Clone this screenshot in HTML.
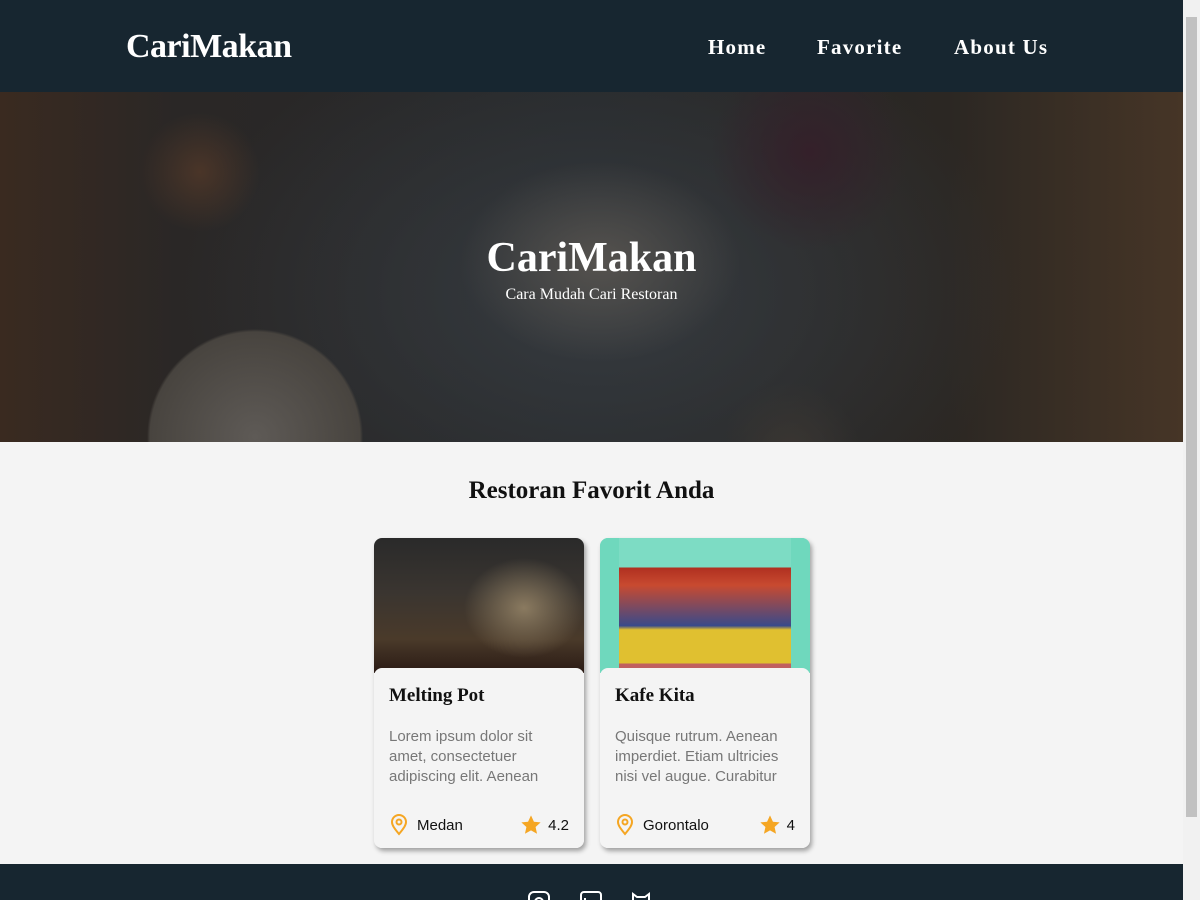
<!DOCTYPE html>
<html><head><meta charset="utf-8"><style>
*{margin:0;padding:0;box-sizing:border-box}
html,body{width:1200px;height:900px;overflow:hidden;background:#f4f4f4;font-family:"Liberation Sans",sans-serif}
.sb{position:absolute;right:0;top:0;width:17px;height:900px;background:#f1f1f1}
.sb div{position:absolute;left:3px;top:17px;width:11px;height:800px;background:#c1c1c1}
header{position:absolute;left:0;top:0;width:1183px;height:92px;background:#172630;color:#fff;font-family:"Liberation Serif",serif}
.logo{position:absolute;left:126px;top:28px;font-size:34px;font-weight:bold;letter-spacing:-0.5px}
nav a{position:absolute;top:35px;font-size:21px;font-weight:bold;letter-spacing:1.2px;color:#fff;text-decoration:none}
.hero{position:absolute;left:0;top:92px;width:1183px;height:350px;overflow:hidden;
background:radial-gradient(ellipse 140px 100px at 600px 170px,#55524e,transparent),
radial-gradient(circle 150px at 255px 345px,#5e5a56 0,#48443f 70%,transparent 72%),
radial-gradient(circle 110px at 810px 60px,#34202a 0,transparent 90%),
radial-gradient(circle 60px at 200px 80px,#4a3528,transparent),
radial-gradient(circle 70px at 790px 360px,#3a3632,transparent),
radial-gradient(ellipse 420px 280px at 600px 200px,#363b40,transparent),
linear-gradient(90deg,#3a2a20 0,#2a2726 15%,#26282a 50%,#2b2723 80%,#463526 100%)}
.hero h1{position:absolute;left:0;width:1183px;top:142px;text-align:center;color:#fff;font-family:"Liberation Serif",serif;font-size:42px;font-weight:bold}
.hero p{position:absolute;left:0;width:1183px;top:194px;text-align:center;color:#fff;font-family:"Liberation Serif",serif;font-size:16px}
h2{position:absolute;left:0;width:1183px;top:477px;text-align:center;font-family:"Liberation Serif",serif;font-size:25px;font-weight:bold;color:#111}
.card{position:absolute;top:538px;width:210px;height:310px;background:#f4f4f4;border-radius:8px;box-shadow:2px 3px 5px rgba(0,0,0,.35);overflow:hidden}
.img{height:135px}
.body{position:absolute;top:130px;left:0;right:0;bottom:0;background:#f4f4f4;border-radius:8px 8px 0 0;padding:0 15px}
.body h3{font-family:"Liberation Serif",serif;font-size:19px;margin-top:17px;color:#111}
.body p{font-size:15px;color:#777;line-height:20px;margin-top:20px}
.loc{position:absolute;bottom:12px;left:15px;font-size:15px;color:#111;display:flex;align-items:center;gap:8px}
.rate{position:absolute;bottom:12px;right:15px;font-size:15px;color:#111;display:flex;align-items:center;gap:6px}
footer{position:absolute;left:0;top:864px;width:1183px;height:36px;background:#172630}
</style></head><body>
<header><div class="logo">CariMakan</div>
<nav><a style="left:708px">Home</a><a style="left:817px">Favorite</a><a style="left:954px">About Us</a></nav></header>
<div class="hero"><h1>CariMakan</h1><p>Cara Mudah Cari Restoran</p></div>
<h2>Restoran Favorit Anda</h2>
<div class="card" style="left:374px"><div class="img" style="background:radial-gradient(ellipse 60px 50px at 150px 70px,#8a7a60,transparent),linear-gradient(180deg,#2a2a2a 0,#3a3530 40%,#4a3a2a 75%,#2a1a14 100%)"></div>
<div class="body"><h3>Melting Pot</h3><p>Lorem ipsum dolor sit amet, consectetuer adipiscing elit. Aenean</p></div>
<div class="loc"><svg width="20" height="22" viewBox="0 0 20 22"><path d="M10 20C5 14 3 11 3 8a7 7 0 0 1 14 0c0 3-2 6-7 12z" fill="none" stroke="#f5a623" stroke-width="2"/><circle cx="10" cy="8" r="2.5" fill="none" stroke="#f5a623" stroke-width="2"/></svg>Medan</div>
<div class="rate"><svg width="22" height="22" viewBox="0 0 24 24"><path d="M12 1.5l3.2 7 7.3.7-5.5 5 1.6 7.3L12 17.8 5.4 21.5 7 14.2l-5.5-5 7.3-.7z" fill="#f5a623"/></svg>4.2</div></div>
<div class="card" style="left:600px"><div class="img" style="background:linear-gradient(90deg,#6fd8bd 0,#6fd8bd 9%,transparent 9%,transparent 91%,#6fd8bd 91%),linear-gradient(180deg,#7ddcc4 0,#7ddcc4 22%,#b03020 22%,#c84a30 35%,#3a4a8a 65%,#e0c030 68%,#e0c030 93%,#c06060 93%)"></div>
<div class="body"><h3>Kafe Kita</h3><p>Quisque rutrum. Aenean imperdiet. Etiam ultricies nisi vel augue. Curabitur</p></div>
<div class="loc"><svg width="20" height="22" viewBox="0 0 20 22"><path d="M10 20C5 14 3 11 3 8a7 7 0 0 1 14 0c0 3-2 6-7 12z" fill="none" stroke="#f5a623" stroke-width="2"/><circle cx="10" cy="8" r="2.5" fill="none" stroke="#f5a623" stroke-width="2"/></svg>Gorontalo</div>
<div class="rate"><svg width="22" height="22" viewBox="0 0 24 24"><path d="M12 1.5l3.2 7 7.3.7-5.5 5 1.6 7.3L12 17.8 5.4 21.5 7 14.2l-5.5-5 7.3-.7z" fill="#f5a623"/></svg>4</div></div>
<footer><svg width="160" height="36" style="position:absolute;left:525px;top:0" viewBox="0 0 160 36" fill="none" stroke="#fff" stroke-width="2">
<rect x="4" y="28" width="20" height="20" rx="5"/><circle cx="14" cy="38" r="4"/>
<rect x="56" y="28" width="20" height="20" rx="3"/><line x1="60" y1="34" x2="60" y2="36"/>
<path d="M108 40v-10l4 3h8l4-3v10"/></svg></footer>
<div class="sb"><div></div></div>
</body></html>
